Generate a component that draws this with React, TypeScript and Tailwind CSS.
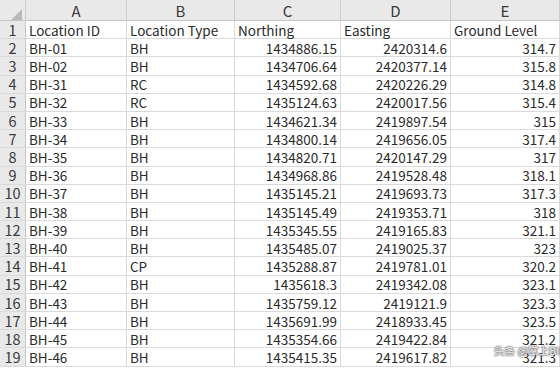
import React from 'react';

const rows: [string, string, string, string, string][] = [
  ['Location ID', 'Location Type', 'Northing', 'Easting', 'Ground Level'],
  ['BH-01', 'BH', '1434886.15', '2420314.6', '314.7'],
  ['BH-02', 'BH', '1434706.64', '2420377.14', '315.8'],
  ['BH-31', 'RC', '1434592.68', '2420226.29', '314.8'],
  ['BH-32', 'RC', '1435124.63', '2420017.56', '315.4'],
  ['BH-33', 'BH', '1434621.34', '2419897.54', '315'],
  ['BH-34', 'BH', '1434800.14', '2419656.05', '317.4'],
  ['BH-35', 'BH', '1434820.71', '2420147.29', '317'],
  ['BH-36', 'BH', '1434968.86', '2419528.48', '318.1'],
  ['BH-37', 'BH', '1435145.21', '2419693.73', '317.3'],
  ['BH-38', 'BH', '1435145.49', '2419353.71', '318'],
  ['BH-39', 'BH', '1435345.55', '2419165.83', '321.1'],
  ['BH-40', 'BH', '1435485.07', '2419025.37', '323'],
  ['BH-41', 'CP', '1435288.87', '2419781.01', '320.2'],
  ['BH-42', 'BH', '1435618.3', '2419342.08', '323.1'],
  ['BH-43', 'BH', '1435759.12', '2419121.9', '323.3'],
  ['BH-44', 'BH', '1435691.99', '2418933.45', '323.5'],
  ['BH-45', 'BH', '1435354.66', '2419422.84', '321.2'],
  ['BH-46', 'BH', '1435415.35', '2419617.82', '321.3'],
];

const cols = ['A', 'B', 'C', 'D', 'E'];
const gridCols = 'grid grid-cols-[26px_101px_108px_106px_110px_109px]';

export default function App() {
  return (
    <main className="relative w-[560px] h-[372px] overflow-hidden bg-white text-[#2a2a2a] font-['Noto_Sans_CJK_SC','Noto_Sans',sans-serif]">
      {/* column letters */}
      <div className={`${gridCols} h-[21px] bg-[#e9e9e9] border-b border-[#c6c6c6]`}>
        <div className="relative border-r border-[#cfcfcf]">
          <svg className="absolute right-[3px] bottom-[3px]" width="11" height="11" viewBox="0 0 11 11">
            <polygon points="11,0 11,11 0,11" fill="#b9b9b9" />
          </svg>
        </div>
        {cols.map(c => (
          <div key={c} className="flex items-center justify-center border-r border-[#cfcfcf] text-[15px] text-[#3a3a3a]">
            {c}
          </div>
        ))}
      </div>

      {rows.map((r, i) => (
        <div key={i} className={`${gridCols} h-[18.2px] border-b border-[#dadada] text-[13.5px] leading-none`}>
          <div className="flex items-end justify-center pb-[1px] bg-[#e9e9e9] border-r border-[#c6c6c6] text-[14.5px] text-[#3a3a3a]">
            {i + 1}
          </div>
          <div className="flex items-end pl-[3px] pb-[1px] border-r border-[#dadada]">{r[0]}</div>
          <div className="flex items-end pl-[3px] pb-[1px] border-r border-[#dadada]">{r[1]}</div>
          {[r[2], r[3], r[4]].map((v, j) => (
            <div
              key={j}
              className={`flex items-end pb-[1px] border-r border-[#dadada] ${i === 0 ? 'pl-[3px] justify-start' : 'pr-[3px] justify-end'}`}
            >
              {v}
            </div>
          ))}
        </div>
      ))}

      {/* watermark */}
      <div className="absolute left-[494px] top-[346px] text-[10.5px] leading-none font-bold text-white/80 whitespace-nowrap [text-shadow:0_0_2px_#555,0_0_1px_#555]">
        头条 @掌上BIM
      </div>
    </main>
  );
}
